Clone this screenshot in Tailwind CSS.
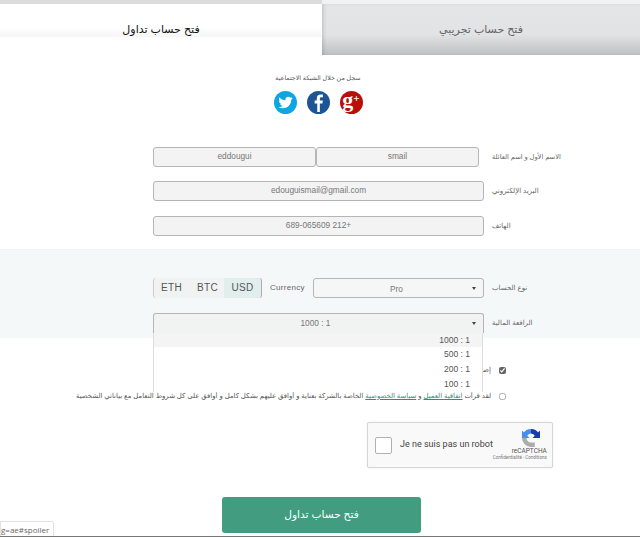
<!DOCTYPE html>
<html lang="en">
<head>
  <meta charset="UTF-8">
  <title>Open account</title>
  <script src="https://cdn.jsdelivr.net/npm/@tailwindcss/browser@4"></script>
</head>
<body class="bg-white font-['Liberation_Sans','DejaVu_Sans',sans-serif] text-[#555]">
  <div class="relative w-[640px] h-[537px] overflow-hidden">

    <!-- tabs -->
    <div class="flex h-[4px]">
      <div class="w-[322px] bg-[#dcdcdc]"></div>
      <div class="flex-1 bg-[#f1f2f3]"></div>
    </div>
    <div class="flex h-[51px] items-start">
      <div class="w-[322px] h-[33px] pt-[17px] bg-gradient-to-b from-white from-70% to-[#f6f6f6] text-center text-[11px] leading-[17px] text-[#111]" dir="rtl">فتح حساب تداول</div>
      <div class="flex-1 h-[51px] bg-gradient-to-b from-[#e4e5e7] via-[#e2e3e5] via-60% to-[#bfc0c2] shadow-[inset_3px_0_4px_-2px_rgba(0,0,0,.18)] flex items-center justify-center text-[11px] text-[#666]" dir="rtl">فتح حساب تجريبي</div>
    </div>

    <!-- social -->
    <div class="flex flex-col items-center w-[636px] mt-[17px]">
      <div class="text-[6.3px] leading-[12px] text-[#555]" dir="rtl">سجل من خلال الشبكة الاجتماعية</div>
      <div class="flex gap-[10px] mt-[7px]">
        <svg class="w-[23px] h-[23px]" viewBox="0 0 24 24"><circle cx="12" cy="12" r="12" fill="#0ea5e3"/><path fill="#fff" transform="translate(4.6 4.6) scale(.62)" d="M23.95 4.57a10 10 0 0 1-2.82.77 4.96 4.96 0 0 0 2.16-2.72c-.95.55-2 .96-3.13 1.19a4.92 4.92 0 0 0-8.38 4.48C7.69 8.09 4.07 6.13 1.64 3.16a4.82 4.82 0 0 0-.67 2.48c0 1.71.87 3.21 2.19 4.1a4.9 4.9 0 0 1-2.23-.61v.06a4.92 4.92 0 0 0 3.95 4.83 5 5 0 0 1-2.21.08 4.94 4.94 0 0 0 4.6 3.42A9.87 9.87 0 0 1 0 19.54a13.9 13.9 0 0 0 7.55 2.21c9.05 0 14-7.5 14-13.98 0-.21 0-.42-.02-.63a9.94 9.94 0 0 0 2.46-2.55z"/></svg>
        <svg class="w-[23px] h-[23px]" viewBox="0 0 24 24"><circle cx="12" cy="12" r="12" fill="#1d5594"/><path fill="#fff" d="M13.4 22v-9h2.700l.4-3.100h-3.100V8c0-.9.3-1.500 1.600-1.500h1.600V3.700c-.3 0-1.300-.1-2.400-.1-2.400 0-4 1.400-4 4.100v2.200H8V13h2.700v9z"/></svg>
        <div class="w-[23px] h-[23px] rounded-full bg-[#b80f0a] flex items-center justify-center text-white font-['Liberation_Serif',serif] font-bold text-[22px] leading-none pb-[5px]">g<span class="text-[11px] -mt-[4px]">+</span></div>
      </div>
    </div>

    <!-- personal details -->
    <div class="mt-[33px] pl-[153px]">
      <div class="flex items-center h-[20px]">
        <div class="flex w-[326px]">
          <div class="w-[163px] h-[20px] bg-[#f3f3f4] border border-[#b5b5b5] rounded-[3px] text-center text-[8.300px] leading-[16px] text-[#777]">eddougui</div>
          <div class="w-[163px] h-[20px] bg-[#f3f3f4] border border-[#b5b5b5] rounded-[3px] text-center text-[8.300px] leading-[16px] text-[#777]">smail</div>
        </div>
        <div class="ml-[13px] text-[6.700px] text-[#666]" dir="rtl">الاسم الأول و اسم العائلة</div>
      </div>
      <div class="flex items-center h-[20px] mt-[14px]">
        <div class="w-[331px] h-[20px] bg-[#f3f3f4] border border-[#b5b5b5] rounded-[3px] text-center text-[8.300px] leading-[17px] text-[#777]">edouguismail@gmail.com</div>
        <div class="ml-[8px] text-[7px] text-[#666]" dir="rtl">البريد الإلكتروني</div>
      </div>
      <div class="flex items-center h-[20px] mt-[15px]">
        <div class="w-[331px] h-[20px] bg-[#f3f3f4] border border-[#b5b5b5] rounded-[3px] text-center text-[8.300px] leading-[17px] text-[#777]">689-065609 212+</div>
        <div class="ml-[8px] text-[7px] text-[#666]" dir="rtl">الهاتف</div>
      </div>
    </div>

    <!-- account settings band -->
    <div class="mt-[13px] h-[89px] bg-[#f4f8f8] pl-[153px] pt-[28px] border-t border-[#f1f4f4]">
      <div class="flex items-center h-[20px]">
        <div class="flex w-[109px] h-[20px] bg-[#f1f3f3] border-l border-[#ccc] rounded-[3px] text-[10px] tracking-[.3px] leading-[20px] text-[#555]">
          <span class="pl-[7px] w-[43px]">ETH</span>
          <span class="w-[26px]">BTC</span>
          <span class="ml-[1px] flex-1 text-center bg-[#e1eeed] border-r border-[#aab] rounded-r-[3px]">USD</span>
        </div>
        <div class="ml-[8px] w-[43px] text-[8px] tracking-[.3px] text-[#666]">Currency</div>
        <div class="relative w-[171px] h-[20px] pr-[4px] bg-[#f5f6f6] border border-[#b5b5b5] rounded-[3px] text-center text-[8.300px] leading-[20px] text-[#777]">Pro<span class="absolute right-[7px] top-[8px] w-0 h-0 border-x-[2.500px] border-x-transparent border-t-[3px] border-t-[#444]"></span></div>
        <div class="ml-[8px] text-[7px] text-[#666]" dir="rtl">نوع الحساب</div>
      </div>
      <div class="flex items-center h-[20px] mt-[15px]">
        <div class="relative w-[331px] h-[20px] pr-[6px] bg-[#f1f3f3] border border-[#b5b5b5] border-b-0 rounded-t-[3px] text-center text-[8.300px] leading-[18px] text-[#777]">1000 : 1<span class="absolute right-[7px] top-[8px] w-0 h-0 border-x-[2.500px] border-x-transparent border-t-[3px] border-t-[#444]"></span></div>
        <div class="ml-[8px] text-[7px] text-[#666]" dir="rtl">الرافعة المالية</div>
      </div>
    </div>

    <!-- terms -->
    <div class="mt-[27px] pr-[134px] flex justify-end items-center gap-[8px] h-[10px] text-[7px]">
      <span dir="rtl">إصدار</span>
      <input type="checkbox" checked class="w-[7px] h-[7px] m-0 accent-[#666]">
    </div>
    <div class="mt-[16px] pr-[134px] flex justify-end items-center gap-[8px] h-[10px] text-[6.900px] text-[#555]">
      <span dir="rtl" class="whitespace-nowrap">لقد قرأت <span class="text-[#2f8f73] underline">اتفاقية العميل</span> و <span class="text-[#2f8f73] underline">سياسة الخصوصية</span> الخاصة بالشركة بعناية و أوافق عليهم بشكل كامل و أوافق على كل شروط التعامل مع بياناتي الشخصية</span>
      <input type="checkbox" class="w-[7px] h-[7px] m-0 opacity-60">
    </div>

    <!-- recaptcha -->
    <div class="mt-[21px] ml-[367px] w-[186px] h-[46px] bg-[#f9f9f9] border border-[#d6d6d6] rounded-[2px] flex items-center shadow-[0_0_2px_rgba(0,0,0,.1)]">
      <div class="ml-[7px] w-[17px] h-[17px] shrink-0 bg-white border border-[#b0b0b0] rounded-[2px]"></div>
      <div class="ml-[8px] text-[9px] text-[#444] font-['Roboto',sans-serif] whitespace-nowrap">Je ne suis pas un robot</div>
      <div class="ml-auto mr-[7px] flex flex-col items-end">
        <svg class="w-[18px] h-[18px] mr-[7px]" viewBox="0 0 24 24" fill="none">
          <path d="M12 3a9 9 0 0 1 8 5" stroke="#1c3aa9" stroke-width="6"/>
          <path d="M4 8a9 9 0 0 1 8-5" stroke="#4a90e2" stroke-width="6"/>
          <path d="M3 12a9 9 0 0 0 9 9h5" stroke="#ababab" stroke-width="6"/>
          <path d="M24 2v10H14z" fill="#1c3aa9"/>
          <path d="M0 2v10h10z" fill="#4a90e2"/>
        </svg>
        <div class="text-[6.500px] leading-[8px] text-[#555] font-['Roboto',sans-serif]">reCAPTCHA</div>
        <div class="text-[4.500px] leading-[6px] text-[#777] font-['Roboto',sans-serif] whitespace-nowrap">Confidentialité - Conditions</div>
      </div>
    </div>

    <!-- submit -->
    <button class="block mt-[29px] ml-[222px] w-[199px] h-[36px] rounded-[3px] bg-[#429d80] text-white text-[10.600px]" dir="rtl">فتح حساب تداول</button>

    <!-- leverage dropdown, open over the page -->
    <div class="absolute left-[153px] top-[333px] w-[330px] h-[59px] bg-white border-x border-[#ddd] text-[8.500px] text-[#555] text-right">
      <div class="h-[14px] leading-[14px] pr-[12px] bg-[#f4f4f4]">1000 : 1</div>
      <div class="h-[15px] leading-[15px] pr-[12px]">500 : 1</div>
      <div class="h-[15px] leading-[15px] pr-[12px]">200 : 1</div>
      <div class="h-[15px] leading-[15px] pr-[12px]">100 : 1</div>
    </div>

    <!-- browser status link -->
    <div class="absolute left-0 bottom-0 w-[54px] h-[16px] bg-white border border-[#e2e2e2] rounded-tr-[2px] overflow-hidden text-[8px] leading-[15px] text-[#666] font-['Open_Sans',sans-serif] whitespace-nowrap">g=ae#spoiler</div>
    <div class="absolute left-0 bottom-0 w-full h-[1px] bg-[#777]"></div>
  </div>
</body>
</html>
